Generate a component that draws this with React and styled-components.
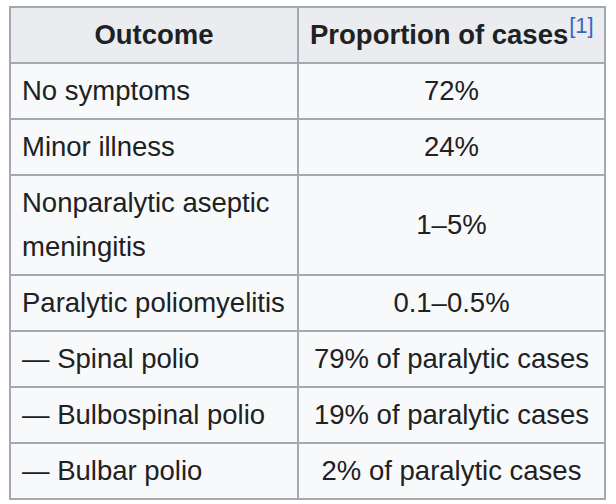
import React from "react";
import styled, { createGlobalStyle } from "styled-components";

const rows = [
	{ outcome: "No symptoms", share: "72%" },
	{ outcome: "Minor illness", share: "24%" },
	{ outcome: "Nonparalytic aseptic meningitis", share: "1–5%" },
	{ outcome: "Paralytic poliomyelitis", share: "0.1–0.5%" },
	{ outcome: "— Spinal polio", share: "79% of paralytic cases" },
	{ outcome: "— Bulbospinal polio", share: "19% of paralytic cases" },
	{ outcome: "— Bulbar polio", share: "2% of paralytic cases" },
];

const App = () => {
	return (
		<Page>
			<GlobalStyle />
			<Table>
				<colgroup>
					<Col $width={288} />
					<Col $width={307} />
				</colgroup>
				<thead>
					<tr>
						<Th>Outcome</Th>
						<Th>
							Proportion of cases
							<Ref>[1]</Ref>
						</Th>
					</tr>
				</thead>
				<tbody>
					{rows.map((row) => (
						<tr key={row.outcome}>
							<Td>{row.outcome}</Td>
							<Td $center>{row.share}</Td>
						</tr>
					))}
				</tbody>
			</Table>
		</Page>
	);
};

const GlobalStyle = createGlobalStyle`
	body {
		margin: 0;
		background: #fff;
		font-family: "Liberation Sans", Arial, sans-serif;
		color: #202122;
	}
`;

const Page = styled.div`
	padding: 6px 0 0 9px;
`;

const Table = styled.table`
	border-collapse: collapse;
	table-layout: fixed;
	width: 597px;
	background: #f8f9fa;
	border: 2px solid #a2a9b1;
	font-size: 27.5px;
	line-height: 44px;
`;

const Col = styled.col`
	width: ${(p) => p.$width}px;
`;

const Th = styled.th`
	background: #eaecf0;
	border: 2px solid #a2a9b1;
	padding: 5px 11px;
	font-weight: bold;
	text-align: center;
	white-space: nowrap;
`;

const Td = styled.td`
	border: 2px solid #a2a9b1;
	padding: 5px 11px;
	text-align: ${(p) => (p.$center ? "center" : "left")};
`;

const Ref = styled.sup`
	color: #3366cc;
	font-weight: normal;
	font-size: 22px;
	line-height: 1;
	vertical-align: 11px;
	margin-left: 1px;
`;

export default App;
